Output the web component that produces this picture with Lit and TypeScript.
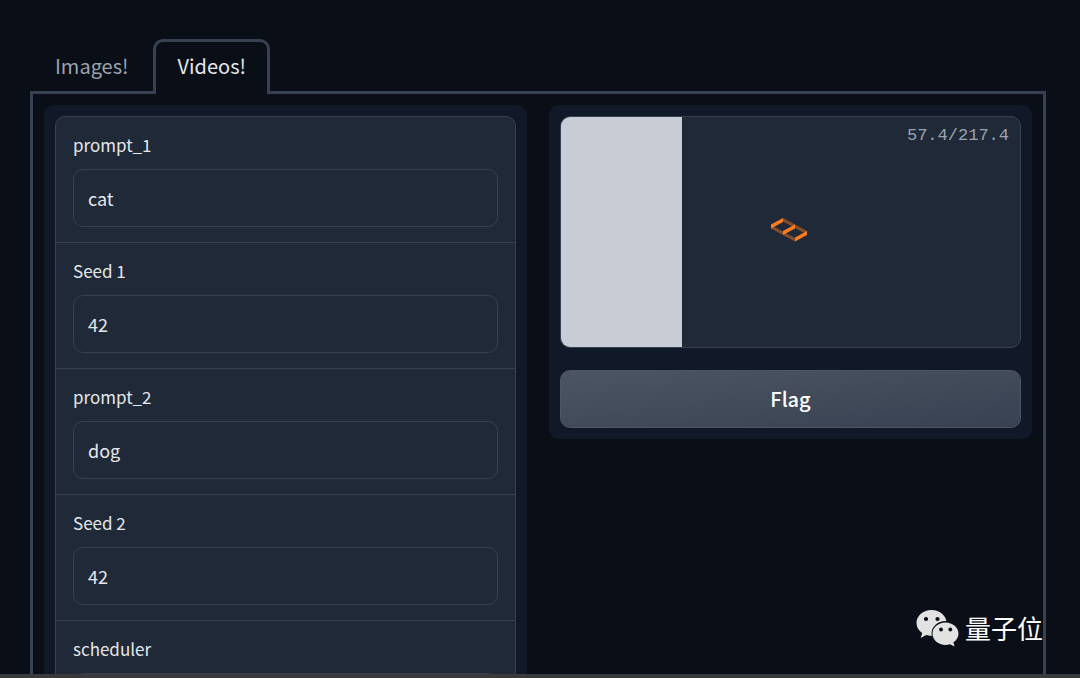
import { LitElement, html, css, svg } from "lit";
import { customElement, property, state } from "lit/decorators.js";

interface Field {
  id: string;
  label: string;
  value: string;
}

const FIELDS: Field[] = [
  { id: "prompt-1", label: "prompt_1", value: "cat" },
  { id: "seed-1", label: "Seed 1", value: "42" },
  { id: "prompt-2", label: "prompt_2", value: "dog" },
  { id: "seed-2", label: "Seed 2", value: "42" },
];

const ELAPSED = 57.4;
const ESTIMATE = 217.4;

@customElement("progress-view")
class ProgressView extends LitElement {
  @property({ type: Number }) elapsed = 0;
  @property({ type: Number }) total = 1;

  static styles = css`
    :host {
      display: block;
    }
    .output {
      position: relative;
      box-sizing: border-box;
      height: 232px;
      display: flex;
      align-items: center;
      justify-content: center;
      background: #1f2937;
      border: 1px solid #374151;
      border-radius: 10px;
      overflow: hidden;
    }
    .bar {
      position: absolute;
      top: 0;
      bottom: 0;
      left: 0;
      background: #c8ccd4;
    }
    .timer {
      position: absolute;
      top: 7px;
      right: 11px;
      font: 17px/24px "Liberation Mono", monospace;
      color: #9ca3af;
    }
    .loader {
      position: relative;
      display: block;
      width: 38px;
      height: 26px;
      margin: 0 4px 4px 0;
    }
  `;

  render() {
    const percent = (this.elapsed / this.total) * 100;
    return html`
      <div class="output">
        <div class="bar" style="width:${percent}%"></div>
        <div class="timer">${this.elapsed.toFixed(1)}/${this.total.toFixed(1)}</div>
        <svg class="loader" viewBox="0 0 38 26" aria-hidden="true">
          ${svg`
            <g fill="#ff7c1f" fill-opacity=".45">
              <path d="M13 1 25 7.500V11L13 4.500Z" />
              <path d="M25 7.500 37 14V17.500L25 11Z" />
              <path d="M1 8 13 14.500V18L1 11.500Z" />
              <path d="M13 14.500 25 21V24.500L13 18Z" />
            </g>
            <g fill="#ff7c1f">
              <path d="M1 7.500 13 1V5L1 11.500Z" />
              <path d="M13 14 25 7.500V11.500L13 18Z" />
              <path d="M25 20.500 37 14V18L25 24.500Z" />
            </g>
          `}
        </svg>
      </div>
    `;
  }
}

@customElement("app-root")
class AppRoot extends LitElement {
  @state() private tab = "Videos!";

  static styles = css`
    :host {
      display: flex;
      flex-direction: column;
      height: 100vh;
      overflow: hidden;
      position: relative;
      background: #0a0f17;
      color: #e5e7eb;
      font-family: "Noto Sans CJK SC", sans-serif;
    }
    .page {
      flex: 1;
      min-height: 0;
      overflow: hidden;
      padding: 39px 34px 0 30px;
    }
    .tabs {
      display: flex;
      border-bottom: 3px solid #374151;
    }
    .tab {
      box-sizing: border-box;
      height: 55px;
      margin: 0 0 -3px;
      padding: 0 21px 4px 22px;
      border: 3px solid transparent;
      border-bottom: 0;
      border-radius: 10px 10px 0 0;
      background: none;
      color: #9ca3af;
      font: 400 20px/28px "Noto Sans CJK SC", sans-serif;
    }
    .tab.active {
      border-color: #374151;
      background: #0a0f17;
      color: #e5e7eb;
    }
    .content {
      display: grid;
      grid-template-columns: 1fr 1fr;
      align-items: start;
      gap: 22px;
      padding: 11px;
      border: 3px solid #374151;
      border-top: 0;
    }
    .panel {
      display: flex;
      flex-direction: column;
      gap: 22px;
      padding: 11px;
      border-radius: 10px;
      background: #111827;
    }
    .form {
      display: flex;
      flex-direction: column;
      gap: 1px;
      border: 1px solid #374151;
      border-radius: 10px;
      background: #374151;
      overflow: hidden;
    }
    .field {
      display: flex;
      flex-direction: column;
      gap: 11px;
      padding: 14px 17px 15px;
      background: #1f2937;
    }
    label {
      font-size: 17px;
      line-height: 27px;
    }
    input,
    select {
      box-sizing: border-box;
      width: 100%;
      height: 58px;
      padding: 0 14px;
      border: 1px solid #374151;
      border-radius: 10px;
      background: #1f2937;
      color: #e5e7eb;
      font: 400 18px/26px "Noto Sans CJK SC", sans-serif;
    }
    .flag {
      height: 58px;
      padding: 0;
      border: 1px solid #4b5563;
      border-radius: 10px;
      background: linear-gradient(to bottom right, #4b5563, #374151);
      color: #fff;
      font: 500 20px/28px "Noto Sans CJK SC", sans-serif;
    }
    .edge {
      height: 4px;
      background: #3a3a3c;
    }
    .watermark {
      position: absolute;
      right: 37px;
      bottom: 31px;
      display: flex;
      align-items: center;
      gap: 6px;
      color: #fff;
      font-size: 26px;
      line-height: 38px;
    }
    .watermark svg {
      display: block;
      width: 43px;
      height: 38px;
    }
  `;

  private renderTab(name: string) {
    const active = this.tab === name;
    return html`<button
      class="tab ${active ? "active" : ""}"
      role="tab"
      aria-selected=${active}
      @click=${() => (this.tab = name)}
    >${name}</button>`;
  }

  render() {
    return html`
      <main class="page">
        <div class="tabs" role="tablist">
          ${this.renderTab("Images!")}${this.renderTab("Videos!")}
        </div>
        <div class="content">
          <section class="panel">
            <form class="form">
              ${FIELDS.map(
                (f) => html`<div class="field">
                  <label for=${f.id}>${f.label}</label>
                  <input id=${f.id} type="text" .value=${f.value} />
                </div>`
              )}
              <div class="field">
                <label for="scheduler">scheduler</label>
                <select id="scheduler"></select>
              </div>
            </form>
          </section>
          <section class="panel">
            <progress-view .elapsed=${ELAPSED} .total=${ESTIMATE}></progress-view>
            <button class="flag">Flag</button>
          </section>
        </div>
      </main>
      <div class="edge"></div>
      <div class="watermark">
        <svg viewBox="0 0 43 38" aria-hidden="true">
          <path
            fill="#e2e2e2"
            d="M15.500 1C7.200 1 .5 6.800.5 14c0 4.200 2.200 7.700 5.700 10.100L4.700 29l5.500-2.900c1.700.5 3.500.8 5.300.8 8.300 0 15-5.800 15-13S23.800 1 15.500 1Z"
          />
          <ellipse cx="29.500" cy="24.500" rx="14" ry="12.500" fill="#0a0f17" />
          <path
            fill="#e2e2e2"
            d="M29.500 13.500c-7.200 0-13 5-13 11.200s5.800 11.200 13 11.200c1.600 0 3.100-.2 4.500-.7l4.600 2.300-1.200-4.200c3.100-2 5.100-5.100 5.100-8.600 0-6.200-5.800-11.200-13-11.200Z"
          />
          <g fill="#0a0f17">
            <circle cx="10" cy="10" r="2.100" />
            <circle cx="21.500" cy="10" r="2.100" />
            <circle cx="25" cy="20.500" r="1.900" />
            <circle cx="34.300" cy="20.500" r="1.900" />
          </g>
        </svg>
        <span>量子位</span>
      </div>
    `;
  }
}
